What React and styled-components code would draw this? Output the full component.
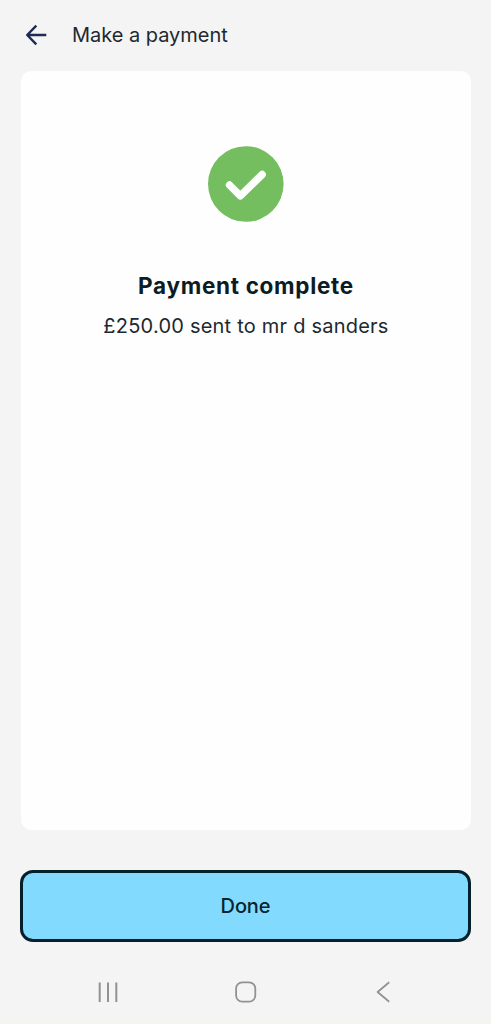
import React from "react";
import styled, { createGlobalStyle } from "styled-components";

const GlobalStyle = createGlobalStyle`
  * { box-sizing: border-box; }
  body { margin: 0; background: #f4f4f4; }
`;

const Screen = styled.main`
  display: flex;
  flex-direction: column;
  width: 491px;
  height: 1024px;
  overflow: hidden;
  background: #f4f4f4;
  color: #0b1c24;
  font-family: Inter, "Liberation Sans", sans-serif;
`;

const Header = styled.header`
  display: flex;
  align-items: center;
  height: 71px;
  padding: 0 0 1px 24px;
  gap: 24px;
`;

const BackButton = styled.button`
  display: flex;
  padding: 0;
  border: 0;
  background: none;
  color: #1d2b55;
`;

const Title = styled.h1`
  margin: 0;
  font-size: 20px;
  font-weight: 400;
  line-height: 28px;
  letter-spacing: -0.03px;
  color: #1c2930;
`;

const Card = styled.section`
  display: flex;
  flex-direction: column;
  align-items: center;
  height: 759px;
  margin: 0 20px 0 21px;
  padding-top: 75px;
  border-radius: 10px;
  background: #fefefe;
`;

const Heading = styled.h2`
  margin: 48px 0 0;
  font-size: 22.5px;
  font-weight: 650;
  line-height: 32px;
  letter-spacing: 0.7px;
  white-space: nowrap;
`;

const Detail = styled.p`
  margin: 9px 0 0;
  font-size: 20px;
  line-height: 30px;
  letter-spacing: 0.22px;
  white-space: nowrap;
  color: #1c2930;
`;

const DoneButton = styled.button`
  height: 72px;
  margin: 40px 20px 0;
  padding: 0;
  border: 3px solid #03202b;
  border-radius: 13px;
  background: #82daff;
  color: #062430;
  font: 500 20px/28px Inter, "Liberation Sans", sans-serif;
  letter-spacing: -0.1px;
`;

const SystemBar = styled.nav`
  display: flex;
  flex: 1;
  align-items: center;
  justify-content: space-between;
  padding: 23px 96px 0;
  border-bottom: 5px solid #f4f5f0;
  color: #929292;
`;

const Icon = styled.svg`
  display: block;
  fill: none;
  stroke: currentColor;
  stroke-width: ${({ $weight }) => $weight};
  stroke-linecap: ${({ $cap }) => $cap || "round"};
  stroke-linejoin: round;
`;

export default function App() {
  return (
    <>
      <GlobalStyle />
      <Screen>
        <Header>
          <BackButton aria-label="Back">
            <Icon width="24" height="24" viewBox="0 0 24 24" $weight={2.4} $cap="butt">
              <path d="M22.3 12H3.6M12.3 2.7L3.2 12L12.3 21.3" />
            </Icon>
          </BackButton>
          <Title>Make a payment</Title>
        </Header>
        <Card>
          <Icon width="76" height="76" viewBox="0 0 76 76" $weight={7.4}>
            <circle cx="37.8" cy="38" r="37.8" fill="#74be60" stroke="none" />
            <path d="M21.5 39L32.3 49.8L54.2 28.5" stroke="#fff" />
          </Icon>
          <Heading>Payment complete</Heading>
          <Detail>£250.00 sent to mr d sanders</Detail>
        </Card>
        <DoneButton>Done</DoneButton>
        <SystemBar>
          <Icon width="24" height="24" viewBox="0 0 24 24" $weight={2} $cap="butt">
            <path d="M3.7 2.5V22M12 2.5V22M20.3 2.5V22" />
          </Icon>
          <Icon width="24" height="24" viewBox="0 0 24 24" $weight={1.8}>
            <rect x="2.1" y="2.4" width="19.2" height="19.2" rx="6.2" />
          </Icon>
          <Icon width="24" height="24" viewBox="0 0 24 24" $weight={1.8} $cap="butt">
            <path d="M18.2 2.3L6.6 12L18.2 21.8" />
          </Icon>
        </SystemBar>
      </Screen>
    </>
  );
}
